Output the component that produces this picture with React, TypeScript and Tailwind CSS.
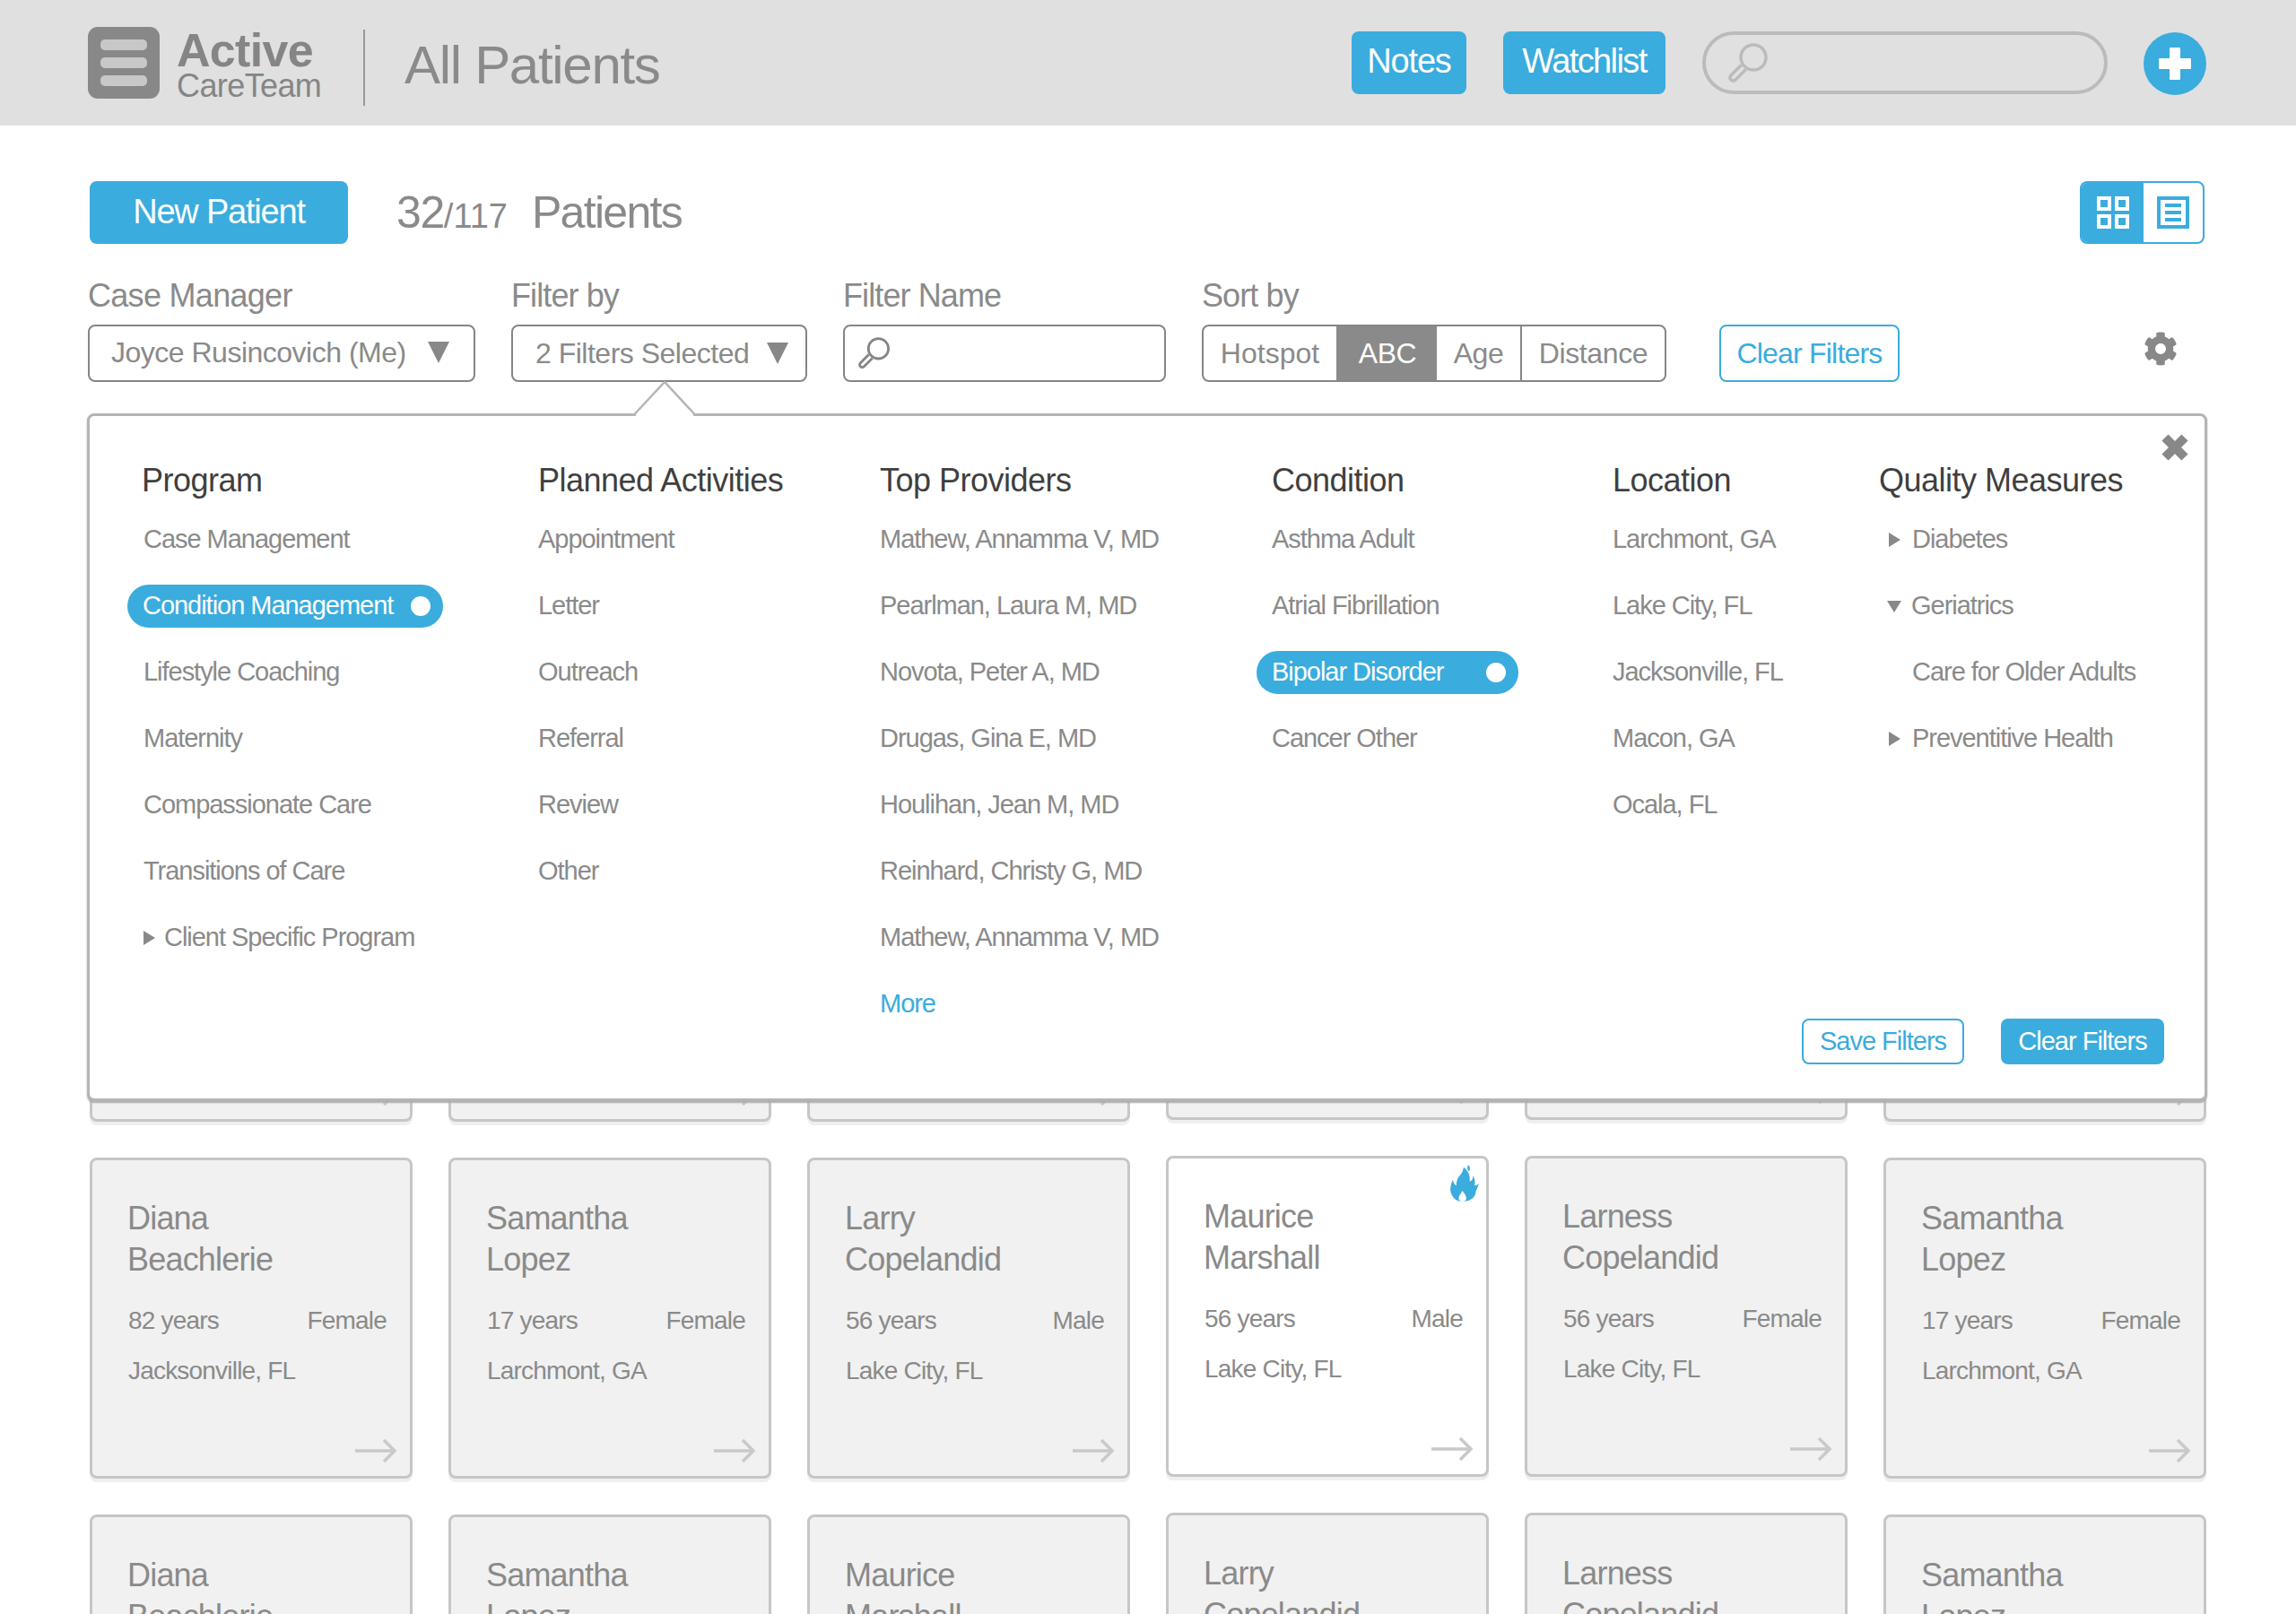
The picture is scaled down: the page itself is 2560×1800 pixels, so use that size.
import { FaCog } from "react-icons/fa";

const BLUE = "bg-[#3aacde]";

const columns = [
  {
    title: "Program",
    items: ["Case Management", "Condition Management", "Lifestyle Coaching", "Maternity", "Compassionate Care", "Transitions of Care", "▸Client Specific Program"],
  },
  { title: "Planned Activities", items: ["Appointment", "Letter", "Outreach", "Referral", "Review", "Other"] },
  {
    title: "Top Providers",
    items: ["Mathew, Annamma V, MD", "Pearlman, Laura M, MD", "Novota, Peter A, MD", "Drugas, Gina E, MD", "Houlihan, Jean M, MD", "Reinhard, Christy G, MD", "Mathew, Annamma V, MD", "More"],
  },
  { title: "Condition", items: ["Asthma Adult", "Atrial Fibrillation", "Bipolar Disorder", "Cancer Other"] },
  { title: "Location", items: ["Larchmont, GA", "Lake City, FL", "Jacksonville, FL", "Macon, GA", "Ocala, FL"] },
  { title: "Quality Measures", items: ["▸Diabetes", "▾Geriatrics", "  Care for Older Adults", "▸Preventitive Health"] },
];

const secondRow = [
  { first: "Diana", last: "Beachlerie", age: "82 years", sex: "Female", city: "Jacksonville, FL" },
  { first: "Samantha", last: "Lopez", age: "17 years", sex: "Female", city: "Larchmont, GA" },
  { first: "Larry", last: "Copelandid", age: "56 years", sex: "Male", city: "Lake City, FL" },
  { first: "Maurice", last: "Marshall", age: "56 years", sex: "Male", city: "Lake City, FL", hot: true, up: true },
  { first: "Larness", last: "Copelandid", age: "56 years", sex: "Female", city: "Lake City, FL", up: true },
  { first: "Samantha", last: "Lopez", age: "17 years", sex: "Female", city: "Larchmont, GA" },
];

const thirdRow = [
  { first: "Diana", last: "Beachlerie", age: "82 years", sex: "Female", city: "Jacksonville, FL" },
  { first: "Samantha", last: "Lopez", age: "17 years", sex: "Female", city: "Larchmont, GA" },
  { first: "Maurice", last: "Marshall", age: "56 years", sex: "Male", city: "Lake City, FL" },
  { first: "Larry", last: "Copelandid", age: "56 years", sex: "Male", city: "Lake City, FL", up: true },
  { first: "Larness", last: "Copelandid", age: "56 years", sex: "Female", city: "Lake City, FL", up: true },
  { first: "Samantha", last: "Lopez", age: "17 years", sex: "Female", city: "Larchmont, GA" },
];

function Magnifier({ className, color }: { className: string; color: string }) {
  return (
    <svg viewBox="0 0 45 45" className={className} fill="none" stroke={color} strokeWidth="3.5">
      <circle cx="28" cy="16" r="14" />
      <path d="M19.5 29.5 L8 41 A3.5 3.5 0 0 1 3 36 L14.5 24.5" strokeLinejoin="round" />
    </svg>
  );
}

function Arrow() {
  return (
    <svg viewBox="0 0 47 28" className="absolute right-[14px] bottom-[14px] h-[28px] w-[47px]" fill="none" stroke="#c9c9c9" strokeWidth="3.5">
      <path d="M0 14 H44 M32 2 L44 14 L32 26" />
    </svg>
  );
}

function Flame() {
  return (
    <svg viewBox="0 0 34 44" className="absolute right-[8px] top-[7px] h-[41px] w-[32px]">
      <path
        fill="#3aacde"
        d="M16 3 C22 8 24 14 23 20 C26 19 27 18 27 13 C29 17 30 20 29 25 C31 25 33 24 34 22 C33 28 30 31 30 35 C28 41 22 44 15 44 C7 44 1 39 0 30 C0 26 1 22 3 18 C4 22 5 24 7 25 C7 19 9 15 12 12 C14 10 15 7 16 3 Z"
      />
      <path fill="#3aacde" d="M21 0 C24 3 24 5 22 8 C20 6 20 3 21 0 Z" />
      <path fill="#fff" d="M14 31 C17 34 19 37 19 40 C19 43 17 44 14.5 44 C12 44 10 43 10 40 C10 36 13 35 14 31 Z" />
    </svg>
  );
}

function Card({ first, last, age, sex, city, hot, up }: { first: string; last: string; age: string; sex: string; city: string; hot?: boolean; up?: boolean }) {
  return (
    <div
      className={`relative h-[358px] rounded-lg border-[3px] border-[#c6c6c6] pl-[39px] pr-[26px] pt-[42px] shadow-[0_4px_0_#efefef] ${hot ? "bg-white" : "bg-[#f1f1f1]"} ${up ? "-mt-[2px]" : ""}`}
    >
      {hot && <Flame />}
      <div className="text-[36px] leading-[46px] tracking-[-0.8px]">{first}</div>
      <div className="text-[36px] leading-[46px] tracking-[-0.8px]">{last}</div>
      <div className="mt-[25px] flex justify-between pl-[1px] text-[28px] leading-[40px] tracking-[-0.8px]">
        <span>{age}</span>
        <span>{sex}</span>
      </div>
      <div className="mt-[16px] pl-[1px] text-[28px] leading-[40px] tracking-[-0.8px]">{city}</div>
      <Arrow />
    </div>
  );
}

function FilterItem({ label, deep }: { label: string; deep: boolean }) {
  if (label === "Condition Management" || label === "Bipolar Disorder") {
    const wide = label === "Bipolar Disorder";
    return (
      <div className="flex h-[74px] items-center">
        <div className={`flex h-[48px] items-center justify-between rounded-full ${BLUE} pl-[17px] pr-[14px] text-white ${wide ? "-ml-[17px] w-[292px]" : "-ml-[18px] w-[352px]"}`}>
          <span>{label}</span>
          <span className="h-[22px] w-[22px] rounded-full bg-white" />
        </div>
      </div>
    );
  }
  if (label === "More") {
    return <div className="flex h-[74px] items-center text-[#3aacde]">More</div>;
  }
  const open = label.startsWith("▾");
  const closed = label.startsWith("▸");
  const indented = label.startsWith("  ");
  const text = open || closed ? label.slice(1) : label.trim();
  return (
    <div className="flex h-[74px] items-center">
      {closed && <span className={`h-0 w-0 border-y-[8px] border-l-[13px] border-y-transparent border-l-[#888888] ${deep ? "mr-[13px] ml-[11px]" : "mr-[10px]"}`} />}
      {open && <span className="mr-[11px] ml-[9px] h-0 w-0 border-x-[8px] border-t-[13px] border-x-transparent border-t-[#888888]" />}
      <span className={indented ? "pl-[37px]" : ""}>{text}</span>
    </div>
  );
}

function Caret() {
  return <span className="h-0 w-0 border-x-[12px] border-t-[24px] border-x-transparent border-t-[#888888]" />;
}

export default function App() {
  return (
    <div className="h-[1800px] w-[2560px] overflow-hidden bg-white font-['Liberation_Sans',Arial,sans-serif] text-[#8a8a8a]">
      <header className="flex h-[140px] items-center bg-[#e0e0e0] pl-[98px]">
        <div className="flex h-[80px] w-[80px] flex-col items-center justify-center gap-[8px] rounded-[11px] bg-[#888888]">
          <span className="h-[12px] w-[52px] rounded-[5px] bg-[#c8c8c8]" />
          <span className="h-[12px] w-[52px] rounded-[5px] bg-[#c8c8c8]" />
          <span className="h-[12px] w-[52px] rounded-[5px] bg-[#c8c8c8]" />
        </div>
        <div className="ml-[19px] flex w-[208px] flex-col pt-[5px] text-[#858585]">
          <span className="text-[52px] leading-[46px] font-bold tracking-[-0.7px]">Active</span>
          <span className="text-[36px] leading-[33px] tracking-[-0.6px]">CareTeam</span>
        </div>
        <div className="mt-[10px] h-[85px] w-[2px] bg-[#999999]" />
        <h1 className="ml-[44px] pt-[6px] text-[60px] tracking-[-1.3px]">All Patients</h1>
        <div className="ml-auto flex items-center pr-[100px]">
          <button className={`flex h-[70px] w-[128px] items-center justify-center rounded-lg ${BLUE} pb-[4px] text-[38px] tracking-[-1.2px] text-white`}>Notes</button>
          <button className={`ml-[41px] flex h-[70px] w-[181px] items-center justify-center rounded-lg ${BLUE} pb-[4px] text-[38px] tracking-[-1.6px] text-white`}>Watchlist</button>
          <div className="ml-[41px] flex h-[70px] w-[452px] items-center rounded-full border-[4px] border-[#bbbbbb] pl-[25px]">
            <Magnifier className="h-[45px] w-[45px]" color="#bbbbbb" />
          </div>
          <div className={`relative ml-[40px] mt-[2px] h-[70px] w-[70px] rounded-full ${BLUE}`}>
            <span className="absolute left-[17px] top-[29px] h-[12px] w-[36px] rounded-[1px] bg-white" />
            <span className="absolute left-[29px] top-[17px] h-[36px] w-[12px] rounded-[1px] bg-white" />
          </div>
        </div>
      </header>

      <main className="px-[100px]">
        <div className="flex items-center pt-[62px]">
          <button className={`flex h-[70px] w-[288px] items-center justify-center rounded-lg ${BLUE} pb-[2px] text-[38px] tracking-[-1.2px] text-white`}>New Patient</button>
          <div className="ml-[54px] flex items-baseline text-[50px] leading-none tracking-[-1.4px]">
            <span>32</span>
            <span className="text-[38px] tracking-[0px]">/117</span>
            <span className="ml-[27px] tracking-[-1.7px]">Patients</span>
          </div>
          <div className="ml-auto mr-[2px] flex h-[70px] w-[139px] overflow-hidden rounded-lg border-[2px] border-[#3aacde]">
            <div className={`flex w-[69px] items-center justify-center ${BLUE}`}>
              <svg viewBox="0 0 36 36" className="h-[36px] w-[36px]" fill="none" stroke="#fff" strokeWidth="4">
                <rect x="2" y="2" width="12" height="12" />
                <rect x="22" y="2" width="12" height="12" />
                <rect x="2" y="22" width="12" height="12" />
                <rect x="22" y="22" width="12" height="12" />
              </svg>
            </div>
            <div className="flex flex-1 items-center justify-center">
              <svg viewBox="0 0 36 36" className="h-[36px] w-[36px]" fill="none" stroke="#3aacde" strokeWidth="4">
                <rect x="2" y="2" width="32" height="32" />
                <path d="M9 10 H27 M9 18 H27 M9 26 H27" />
              </svg>
            </div>
          </div>
        </div>

        <div className="-ml-[2px] mt-[26px] flex items-end">
          <label className="w-[432px]">
            <div className="text-[36px] leading-[64px] tracking-[-0.7px]">Case Manager</div>
            <div className="flex h-[64px] items-center justify-between rounded-lg border-2 border-[#858585] pb-[2px] pl-[24px] pr-[27px] text-[32px] tracking-[-0.5px]">
              <span>Joyce Rusincovich (Me)</span>
              <Caret />
            </div>
          </label>
          <label className="ml-[40px] w-[330px]">
            <div className="text-[36px] leading-[64px] tracking-[-0.9px]">Filter by</div>
            <div className="flex h-[64px] items-center justify-between rounded-lg border-2 border-[#858585] pb-[1px] pl-[25px] pr-[19px] text-[32px] tracking-[-0.5px]">
              <span>2 Filters Selected</span>
              <Caret />
            </div>
          </label>
          <label className="ml-[40px] w-[360px]">
            <div className="text-[36px] leading-[64px] tracking-[-0.9px]">Filter Name</div>
            <div className="flex h-[64px] items-center rounded-lg border-2 border-[#858585] pl-[15px]">
              <Magnifier className="h-[36px] w-[36px]" color="#858585" />
            </div>
          </label>
          <div className="ml-[40px] w-[518px]">
            <div className="text-[36px] leading-[64px] tracking-[-0.9px]">Sort by</div>
            <div className="flex h-[64px] overflow-hidden rounded-lg border-2 border-[#858585] text-[32px] tracking-[-0.4px]">
              <span className="flex w-[148px] items-center justify-center pb-[1px] tracking-[0px]">Hotspot</span>
              <span className="flex w-[112px] items-center justify-center bg-[#8a8a8a] pb-[1px] pl-[2px] text-white">ABC</span>
              <span className="flex w-[95px] items-center justify-center border-r-[2px] border-[#858585] pb-[1px]">Age</span>
              <span className="flex flex-1 items-center justify-center pb-[1px]">Distance</span>
            </div>
          </div>
          <button className="ml-[59px] flex h-[64px] w-[201px] items-center justify-center rounded-lg border-2 border-[#3aacde] pb-[1px] text-[32px] tracking-[-0.8px] text-[#3aacde]">Clear Filters</button>
          <FaCog className="mb-[18px] ml-[272px] h-[38px] w-[38px] text-[#888888]" />
        </div>

        <div className="relative">
          {/* panel sits over the first card row */}
          <div className="absolute -left-[3px] top-[35px] z-10 h-[767px] w-[2364px] rounded-lg border-[3px] border-[#b5b5b5] bg-white pl-[58px] pt-[46px] shadow-[0_2px_2px_#aaaaaa]">
            <svg viewBox="0 0 68 40" className="absolute left-[607px] -top-[39px] h-[40px] w-[68px]">
              <path d="M2 40 V37 L34 2 L66 37 V40 Z" fill="#fff" />
              <path d="M0 37.5 L34 1 L68 37.5" fill="none" stroke="#b5b5b5" strokeWidth="2.5" />
            </svg>
            <svg viewBox="0 0 32 32" className="absolute right-[17px] top-[19px] h-[32px] w-[32px]" fill="none" stroke="#888888" strokeWidth="10">
              <path d="M5 5 L27 27 M27 5 L5 27" />
            </svg>
            <div className="grid grid-cols-[442px_381px_437px_380px_297px_1fr]">
              {columns.map((col) => (
                <div key={col.title}>
                  <div className="h-[55px] text-[36px] leading-[52px] tracking-[-0.5px] text-[#3f3f3f]">{col.title}</div>
                  <div className={`text-[29px] tracking-[-1.03px] ${col.title === "Program" ? "pl-[2px]" : ""}`}>
                    {col.items.map((item, i) => (
                      <FilterItem key={i} label={item} deep={col.title === "Quality Measures"} />
                    ))}
                  </div>
                </div>
              ))}
            </div>
            <div className="absolute bottom-[38px] right-[45px] flex gap-[41px] text-[29px] tracking-[-1px]">
              <button className="flex h-[51px] w-[181px] items-center justify-center rounded-lg border-2 border-[#3aacde] text-[#3aacde]">Save Filters</button>
              <button className={`flex h-[51px] w-[182px] items-center justify-center rounded-lg ${BLUE} text-white`}>Clear Filters</button>
            </div>
          </div>

          <div className="grid grid-cols-6 gap-x-[40px] gap-y-[40px] pt-[467px]">
            {[0, 1, 2, 3, 4, 5].map((n) => (
              <div key={n} className={`relative h-[358px] rounded-lg border-[3px] border-[#c6c6c6] bg-[#f1f1f1] shadow-[0_4px_0_#efefef] ${n === 3 || n === 4 ? "-mt-[2px]" : ""}`}>
                <Arrow />
              </div>
            ))}
            {secondRow.map((p, i) => (
              <Card key={i} {...p} />
            ))}
            {thirdRow.map((p, i) => (
              <Card key={i} {...p} />
            ))}
          </div>
        </div>
      </main>
    </div>
  );
}
